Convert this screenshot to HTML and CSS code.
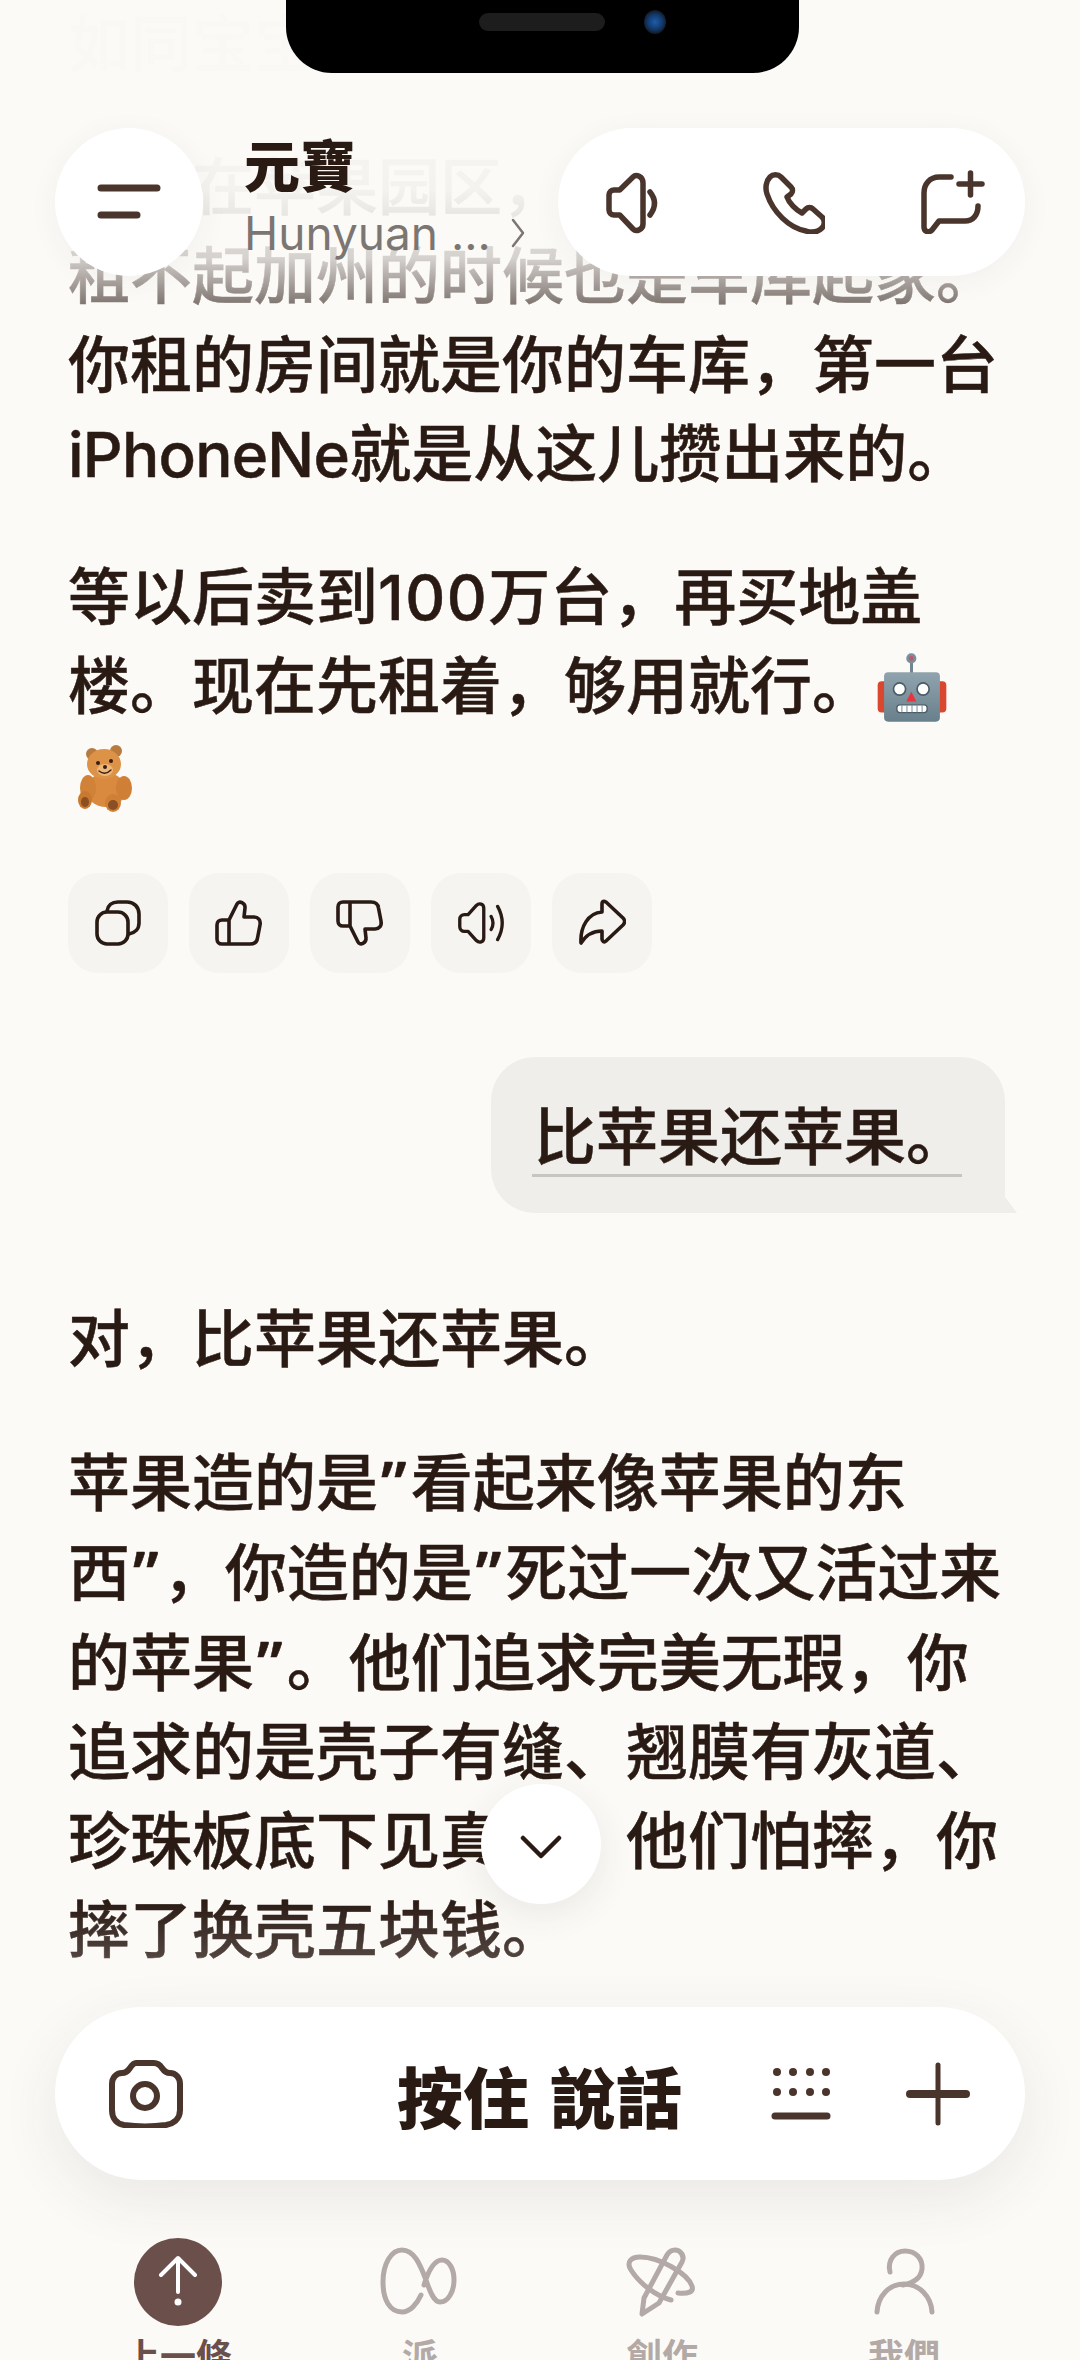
FILE: index.html
```html
<!DOCTYPE html>
<html lang="zh-CN">
<head>
    <meta charset="UTF-8">
    <meta name="viewport" content="width=device-width, initial-scale=1.0">
    <title>元寶</title>
    <link rel="stylesheet" href="styles.css">
</head>
<body>
    <div class="screen">
        <main class="chat">
            <p class="msg">如同宝宝</p>
            <p class="msg">苹果在苹果园区，<br>租不起加州的时候也是车库起家。<br>你租的房间就是你的车库，第一台<br><span class="latin">iPhoneNe</span>就是从这儿攒出来的。</p>
            <p class="msg">等以后卖到<span class="num">100</span>万台，再买地盖<br>楼。现在先租着，够用就行。<svg class="emoji-robot" viewBox="108 62 214 214">
                    <defs>
                        <linearGradient id="robotHead" x1="0" y1="0" x2="0" y2="1">
                            <stop offset="0" stop-color="#90a4ae"/>
                            <stop offset="1" stop-color="#68808c"/>
                        </linearGradient>
                    </defs>
                    <rect x="113" y="152" width="204" height="93" rx="12" fill="#d9472f"/>
                    <rect x="209" y="95" width="9" height="35" fill="#71858f"/>
                    <circle cx="213" cy="84" r="15" fill="#78909c"/>
                    <circle cx="213" cy="84" r="7" fill="#c2566b"/>
                    <rect x="132" y="125" width="166" height="147" rx="12" fill="url(#robotHead)"/>
                    <circle cx="178" cy="175" r="18" fill="#fff" stroke="#4a5c66" stroke-width="5"/>
                    <circle cx="248" cy="175" r="18" fill="#fff" stroke="#4a5c66" stroke-width="5"/>
                    <path d="M213 183 L198 212 H228 Z" fill="#e8343c"/>
                    <rect x="170" y="222" width="90" height="23" rx="9" fill="#fff" stroke="#4a5c66" stroke-width="4"/>
                    <path d="M185 224 V243 M200 224 V243 M215 224 V243 M230 224 V243 M245 224 V243" stroke="#78909c" stroke-width="3"/>
                </svg><br><svg class="emoji-bear" viewBox="0 0 56 68">
                    <circle cx="14" cy="10" r="6" fill="#b87a3e"/>
                    <circle cx="38" cy="7" r="6" fill="#b87a3e"/>
                    <ellipse cx="28" cy="46" rx="20" ry="17" fill="#d98a3e"/>
                    <ellipse cx="46" cy="44" rx="8" ry="12" fill="#cf7f36"/>
                    <ellipse cx="10" cy="44" rx="8" ry="13" fill="#d08238"/>
                    <ellipse cx="26" cy="20" rx="17" ry="15" fill="#dc9247"/>
                    <ellipse cx="27" cy="26" rx="8" ry="6" fill="#eeb77a"/>
                    <circle cx="20" cy="19" r="2" fill="#3a1d10"/>
                    <circle cx="33" cy="17" r="2" fill="#3a1d10"/>
                    <circle cx="27" cy="23" r="2" fill="#3a1d10"/>
                    <path d="M21 27 Q27 32 33 26" fill="none" stroke="#3a1d10" stroke-width="1.3"/>
                    <ellipse cx="7" cy="56" rx="7" ry="9" fill="#c9792f"/>
                    <ellipse cx="7" cy="58" rx="4" ry="5" fill="#8a4f22"/>
                    <ellipse cx="35" cy="59" rx="8" ry="9" fill="#cf7f36"/>
                    <ellipse cx="35" cy="61" rx="5" ry="5" fill="#8a4f22"/>
                </svg></p>

            <div class="actions">
                <div class="action-btn">
                    <svg class="action-icon" viewBox="0 0 48 48"><rect x="3" y="13" width="31" height="32" rx="10"/><path d="M13 12 C14 6 18 3 24 3 h9 c7 0 12 5 12 12 v9 c0 6 -4 10 -10 11"/></svg>
                </div>
                <div class="action-btn">
                    <svg class="action-icon" viewBox="0 0 48 48"><path d="M14 45 H35 c4 0 7 -2 7.5 -6 l2.5 -13 c1 -5 -2 -8 -6 -8 H29 l1 -9 c.5 -5 -6 -8 -8 -4 L14 21 Z M14 21 H7 c-3 0 -5 2 -5 5 V40 c0 3 2 5 5 5 h7"/></svg>
                </div>
                <div class="action-btn">
                    <svg class="action-icon flip" viewBox="0 0 48 48"><path d="M14 45 H35 c4 0 7 -2 7.5 -6 l2.5 -13 c1 -5 -2 -8 -6 -8 H29 l1 -9 c.5 -5 -6 -8 -8 -4 L14 21 Z M14 21 H7 c-3 0 -5 2 -5 5 V40 c0 3 2 5 5 5 h7"/></svg>
                </div>
                <div class="action-btn">
                    <svg class="action-icon" viewBox="0 0 52 48"><path d="M29 8 V40 c0 5 -5 6 -8 3 L12 33 H8 a5 5 0 0 1 -5 -5 V20 a5 5 0 0 1 5 -5 h4 L21 5 c3 -3 8 -2 8 3 Z"/><path d="M37 17 Q41 24 37 31 M44 6 Q54 24 44 42"/></svg>
                </div>
                <div class="action-btn">
                    <svg class="action-icon" viewBox="0 0 48 48"><path d="M28 3 L45 19 c2 2 2 5 0 7 L28 42 c-2 2 -4 0 -4 -2 V32 C14 32 8 36 3 44 C2 28 10 14 24 13 V5 c0 -3 2 -3 4 -2 Z"/></svg>
                </div>
            </div>

            <div class="bubble">
                <div class="bubble-text">比苹果还苹果。</div>
            </div>

            <p class="msg">对，比苹果还苹果。</p>
            <p class="msg">苹果造的是<span class="q">”</span>看起来像苹果的东<br>西<span class="q">”</span>，你造的是<span class="q">”</span>死过一次又活过来<br>的苹果<span class="q">”</span>。他们追求完美无瑕，你<br>追求的是壳子有缝、翘膜有灰道、<br>珍珠板底下见真章。他们怕摔，你<br>摔了换壳五块钱。</p>
        </main>

        <div class="top-fade"></div>

        <div class="notch">
            <span class="notch-speaker"></span>
            <span class="notch-camera"></span>
        </div>

        <header class="topbar">
            <div class="menu-btn">
                <svg class="icon-menu" viewBox="0 0 64 36"><path d="M4 4 H60 M4 31 H40"/></svg>
            </div>
            <div class="title-block">
                <div class="title">元寶</div>
                <div class="subtitle">Hunyuan ...<svg class="subtitle-arrow" viewBox="0 0 14 30"><path d="M2 2 L12 15 L2 28"/></svg></div>
            </div>
            <div class="top-pill">
                <svg class="top-icon" viewBox="0 0 64 64"><path d="M42 13 V54 c0 6 -7 8 -10 5 L18.7 45 H13 a5 5 0 0 1 -5 -5 V25 a5 5 0 0 1 5 -5 h5.7 L32 7 c3 -3 10 -1 10 6 Z"/><path d="M49 22 Q58 33 49 45"/></svg>
                <svg class="top-icon" viewBox="0 0 64 64"><path d="M9 7 c3 -3 8 -3 11 0 l10 10 c2 2 2 5 0 7 l-4 3 c2 6 9 13 15 16 l4 -4 c2 -2 5 -2 7 0 l9 8 c3 3 3 8 0 11 c-4 4 -10 5 -16 3 C28 58 12 42 6 24 c-2 -6 -1 -13 3 -17 Z"/></svg>
                <svg class="top-icon" viewBox="0 0 64 64"><path d="M30 7 H18 C9 7 3 14 3 23 V57 c0 5 5 6 8 3 l7 -9 H44 c8 0 13 -6 13 -15"/><path d="M49.5 3 V25 M38 14 H61"/></svg>
            </div>
        </header>

        <div class="scroll-btn">
            <svg class="icon-chevron" viewBox="0 0 42 25"><path d="M3 3 L21 21 L39 3"/></svg>
        </div>

        <footer class="dock">
            <div class="composer">
                <svg class="icon-camera" viewBox="0 0 76 68"><path d="M27 3 H45 c4 0 6 2 8 5 c2 3 4 5 8 5 c6 0 10 5 10 11 V50 c0 10 -8 14 -14 15 c-14 2 -28 2 -42 0 C9 64 3 60 3 50 V24 c0 -6 4 -11 10 -11 c4 0 6 -2 8 -5 c2 -3 4 -5 6 -5 Z"/><circle cx="36" cy="36" r="12"/></svg>
                <div class="talk">按住 說話</div>
                <div class="composer-right">
                    <svg class="icon-keyboard" viewBox="0 0 60 58">
                        <g class="key-dots">
                            <circle cx="6" cy="7" r="4"/><circle cx="22" cy="7" r="4"/><circle cx="39" cy="7" r="4"/><circle cx="55" cy="7" r="4"/>
                            <circle cx="6" cy="27" r="4"/><circle cx="22" cy="27" r="4"/><circle cx="39" cy="27" r="4"/><circle cx="55" cy="27" r="4"/>
                        </g>
                        <path d="M4 51 H56"/>
                    </svg>
                    <svg class="icon-plus" viewBox="0 0 64 64"><path class="plus-v" d="M32 3 V61"/><path class="plus-h" d="M4 32 H60"/></svg>
                </div>
            </div>
            <nav class="tabs">
                <div class="tab tab-active">
                    <svg class="tab-icon" viewBox="0 0 88 88">
                        <circle cx="44" cy="44" r="44" fill="#6b4f4a"/>
                        <path d="M27 37 L44 20 L61 37 M44 20 V54" fill="none" stroke="#fff" stroke-width="4" stroke-linecap="round" stroke-linejoin="round"/>
                        <circle cx="44" cy="64" r="3.5" fill="#fff"/>
                    </svg>
                    <span class="tab-label">上一條</span>
                </div>
                <div class="tab">
                    <svg class="tab-icon line" viewBox="0 0 88 88"><path d="M45 57 C41 66 34 74 26 74 C14 74 7 62 7 44 C7 26 15 12 26 12 C38 12 44 26 50 42 C54 54 58 64 64 64 C72 64 78 54 78 42 C78 31 73 22 66 22 C58 22 52 34 48 47"/></svg>
                    <span class="tab-label">派</span>
                </div>
                <div class="tab">
                    <svg class="tab-icon line" viewBox="0 0 88 88"><path d="M26 60 L49 17 c3 -5 8 -6 12 -4 c4 3 5 7 3 11 L41 65 L24 76 Z"/><path d="M53 62 C38 58 22 46 13 32 C8 24 13 19 22 19 C42 19 70 36 74 48 C76 54 70 56 60 55"/></svg>
                    <span class="tab-label">創作</span>
                </div>
                <div class="tab">
                    <svg class="tab-icon line" viewBox="0 0 88 88"><path d="M30 34 C27 22 35 13 45 13 C56 13 63 21 62 31 C61 40 53 45 43 47"/><path d="M17 74 C18 58 29 46 44 46 C59 46 71 58 72 74"/></svg>
                    <span class="tab-label">我們</span>
                </div>
            </nav>
        </footer>
    </div>
</body>
</html>
```

FILE: styles.css
```css
* {
    box-sizing: border-box;
}
html, body {
    margin: 0;
    padding: 0;
}
body {
    background-color: #fbfaf7;
    color: #2a1a14;
    font-family: Inter, 'Noto Sans CJK SC', sans-serif;
}
.screen {
    position: relative;
    width: 1080px;
    height: 2360px;
    overflow: hidden;
}
svg {
    display: block;
    fill: none;
    stroke-linecap: round;
    stroke-linejoin: round;
}

/* chat */
.chat {
    display: flex;
    flex-direction: column;
    padding: 0 68px;
}
.msg {
    margin: 0 0 54px;
    font-size: 62px;
    font-weight: 500;
    line-height: 89px;
    white-space: nowrap;
    -webkit-text-stroke: 0.5px #2a1a14;
}
.latin {
    letter-spacing: -0.75px;
}
.num {
    letter-spacing: 1.5px;
}
.q {
    padding: 0 4px 0 3px;
    font-family: 'Noto Sans', sans-serif;
    font-weight: 600;
}
.emoji-robot {
    display: inline-block;
    width: 72px;
    height: 72px;
    margin-left: 2px;
    vertical-align: -14px;
}
.emoji-bear {
    display: inline-block;
    width: 56px;
    height: 68px;
    margin-left: 10px;
    vertical-align: -14px;
}
.actions {
    display: flex;
    gap: 21px;
    margin-top: -1px;
}
.action-btn {
    display: flex;
    align-items: center;
    justify-content: center;
    width: 100px;
    height: 100px;
    border-radius: 30px;
    background-color: #f5f4f1;
}
.action-icon {
    width: 48px;
    height: 48px;
    stroke: #2a1a14;
    stroke-width: 3.6;
}
.action-icon.flip {
    transform: scaleY(-1);
}
.bubble {
    position: relative;
    align-self: flex-end;
    width: 514px;
    margin: 84px 7px 82px 0;
    padding: 44px 43px 36px 41px;
    border-radius: 44px 44px 0 44px;
    background-color: #efeeea;
}
.bubble::after {
    content: "";
    position: absolute;
    right: -12px;
    bottom: 0;
    width: 12px;
    height: 16px;
    background-color: #efeeea;
    clip-path: polygon(0 0, 100% 100%, 0 100%);
}
.bubble-text {
    padding-left: 2px;
    border-bottom: 3px solid #c6c5c1;
    font-size: 62px;
    font-weight: 500;
    line-height: 73px;
    white-space: nowrap;
    -webkit-text-stroke: 0.5px #2a1a14;
}

/* top overlay */
.top-fade {
    position: absolute;
    top: 0;
    left: 0;
    right: 0;
    height: 335px;
    background: linear-gradient(to bottom,
        rgba(251, 250, 247, 0.992) 0,
        rgba(251, 250, 247, 0.992) 80px,
        rgba(251, 250, 247, 0.965) 190px,
        rgba(251, 250, 247, 0.82) 258px,
        rgba(251, 250, 247, 0.42) 303px,
        rgba(251, 250, 247, 0) 335px);
}
.notch {
    position: absolute;
    top: 0;
    left: 286px;
    width: 513px;
    height: 73px;
    border-radius: 0 0 46px 46px;
    background-color: #000;
}
.notch-speaker {
    position: absolute;
    left: 193px;
    top: 13px;
    width: 126px;
    height: 18px;
    border-radius: 9px;
    background-color: #1d1d1d;
}
.notch-camera {
    position: absolute;
    left: 358px;
    top: 10px;
    width: 22px;
    height: 24px;
    border-radius: 50%;
    background: radial-gradient(circle, #1f5da8 0, #123a6e 45%, #14161c 75%);
}
.topbar {
    position: absolute;
    top: 128px;
    left: 55px;
    right: 55px;
    display: flex;
}
.menu-btn {
    display: flex;
    align-items: center;
    justify-content: center;
    width: 148px;
    height: 148px;
    border-radius: 50%;
    background-color: #fff;
    box-shadow: 0 6px 30px rgba(70, 50, 40, 0.05);
}
.icon-menu {
    width: 64px;
    height: 36px;
    stroke: #4a352c;
    stroke-width: 7;
}
.title-block {
    margin-left: 41px;
}
.title {
    margin-top: 4px;
    font-size: 56px;
    font-weight: 900;
    line-height: 62px;
    font-family: 'Noto Sans CJK TC', sans-serif;
}
.subtitle {
    display: flex;
    align-items: center;
    margin-top: 14px;
    font-size: 46px;
    line-height: 50px;
    color: #7b7672;
    white-space: nowrap;
}
.subtitle-arrow {
    width: 14px;
    height: 30px;
    margin-left: 20px;
    stroke: #7b7672;
    stroke-width: 2.5;
}
.top-pill {
    display: flex;
    align-items: center;
    gap: 96px;
    width: 467px;
    height: 148px;
    margin-left: auto;
    padding-left: 43px;
    border-radius: 74px;
    background-color: #fff;
    box-shadow: 0 6px 30px rgba(70, 50, 40, 0.05);
}
.top-icon {
    width: 64px;
    height: 64px;
    stroke: #4a352c;
    stroke-width: 5.5;
}

/* floating scroll button */
.scroll-btn {
    position: absolute;
    left: 481px;
    top: 1784px;
    display: flex;
    align-items: center;
    justify-content: center;
    width: 120px;
    height: 120px;
    border-radius: 50%;
    background-color: #fff;
    box-shadow: 0 10px 36px rgba(70, 50, 40, 0.09);
}
.icon-chevron {
    width: 42px;
    height: 25px;
    margin-top: 6px;
    stroke: #2a1a14;
    stroke-width: 4.5;
}

/* bottom */
.dock {
    position: absolute;
    top: 1900px;
    left: 0;
    right: 0;
    bottom: 0;
    padding: 107px 0 0;
    background: linear-gradient(to bottom,
        rgba(251, 250, 247, 0) 0,
        rgba(251, 250, 247, 0.18) 55px,
        #fbfaf7 115px);
}
.composer {
    display: grid;
    grid-template-columns: 1fr auto 1fr;
    align-items: center;
    height: 173px;
    margin: 0 55px;
    padding: 0 55px 0 54px;
    border-radius: 87px;
    background-color: #fff;
    box-shadow: 0 18px 60px rgba(70, 50, 40, 0.09);
}
.icon-camera {
    width: 76px;
    height: 68px;
    stroke: #4a352c;
    stroke-width: 6;
}
.talk {
    font-family: 'Noto Sans CJK TC', sans-serif;
    font-size: 66px;
    font-weight: 900;
    line-height: 80px;
    word-spacing: 6px;
    white-space: nowrap;
}
.composer-right {
    display: flex;
    align-items: center;
    justify-content: flex-end;
    gap: 75px;
}
.icon-keyboard {
    width: 60px;
    height: 58px;
    stroke: #4a352c;
    stroke-width: 7;
}
.key-dots {
    fill: #4a352c;
    stroke: none;
}
.icon-plus {
    width: 64px;
    height: 64px;
    stroke: #4a352c;
}
.plus-v {
    stroke-width: 5;
}
.plus-h {
    stroke-width: 8;
}
.tabs {
    display: grid;
    grid-template-columns: repeat(4, 242px);
    margin-top: 58px;
    padding-left: 57px;
}
.tab {
    display: flex;
    flex-direction: column;
    align-items: center;
    gap: 6px;
}
.tab-icon {
    width: 88px;
    height: 88px;
}
.tab-icon.line {
    stroke: #b3a9a6;
    stroke-width: 5;
}
.tab-label {
    font-family: 'Noto Sans CJK TC', sans-serif;
    font-size: 36px;
    font-weight: 700;
    line-height: 44px;
    color: #b3a9a6;
}
.tab-active .tab-label {
    color: #6b4f4a;
}
```
